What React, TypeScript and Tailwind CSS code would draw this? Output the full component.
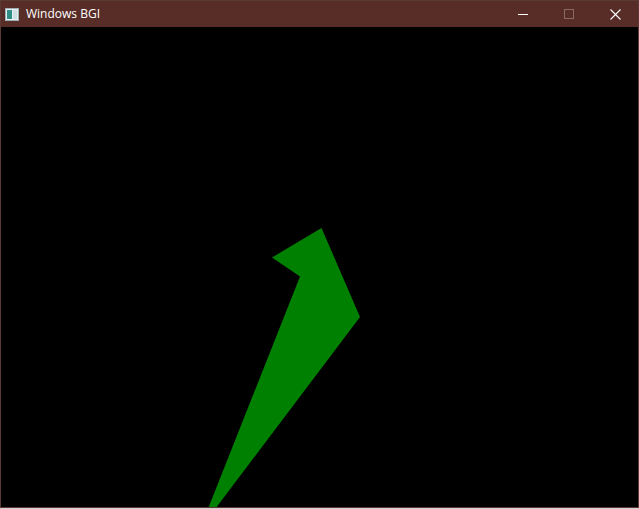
import * as React from 'react';

function AppIcon() {
	return (
		<svg width="14" height="13" viewBox="0 0 14 13" className="shrink-0">
			<rect x="0.5" y="0.5" width="13" height="12" fill="#e8eef0" stroke="#9fb0b5" />
			<rect x="2" y="2" width="5" height="9" fill="#2f8f86" />
			<rect x="8" y="2" width="4" height="9" fill="#cfe0e2" />
		</svg>
	);
}

export default function App() {
	return (
		<div className="w-[639px] h-[509px] flex flex-col bg-[#cfcfcf]" style={{ fontFamily: '"Open Sans", "Noto Sans", sans-serif' }}>
			<div className="h-[508px] flex flex-col border border-[#5b3a35] bg-black">
				{/* Title bar */}
				<div className="h-[26px] shrink-0 flex items-center bg-[#582d28] text-white">
					<div className="pl-[4px] pr-[7px] flex items-center">
						<AppIcon />
					</div>
					<span className="text-[12px] leading-none">Windows BGI</span>
					<div className="ml-auto flex h-full">
						<div className="w-[46px] flex items-center justify-center">
							<div className="w-[10px] h-px bg-white" />
						</div>
						<div className="w-[46px] flex items-center justify-center">
							<div className="w-[10px] h-[10px] border border-[#8a6a65]" />
						</div>
						<div className="w-[46px] flex items-center justify-center">
							<svg width="11" height="11" viewBox="0 0 11 11">
								<path d="M0.5 0.5 L10.5 10.5 M10.5 0.5 L0.5 10.5" stroke="white" strokeWidth="1.1" />
							</svg>
						</div>
					</div>
				</div>
				{/* Canvas */}
				<div className="flex-1 overflow-hidden">
					<svg width="637" height="480" viewBox="0 0 637 480">
						<polygon points="320.5,201 271,230.5 299,249.5 199,502 359,290" fill="#008000" />
					</svg>
				</div>
			</div>
		</div>
	);
}
